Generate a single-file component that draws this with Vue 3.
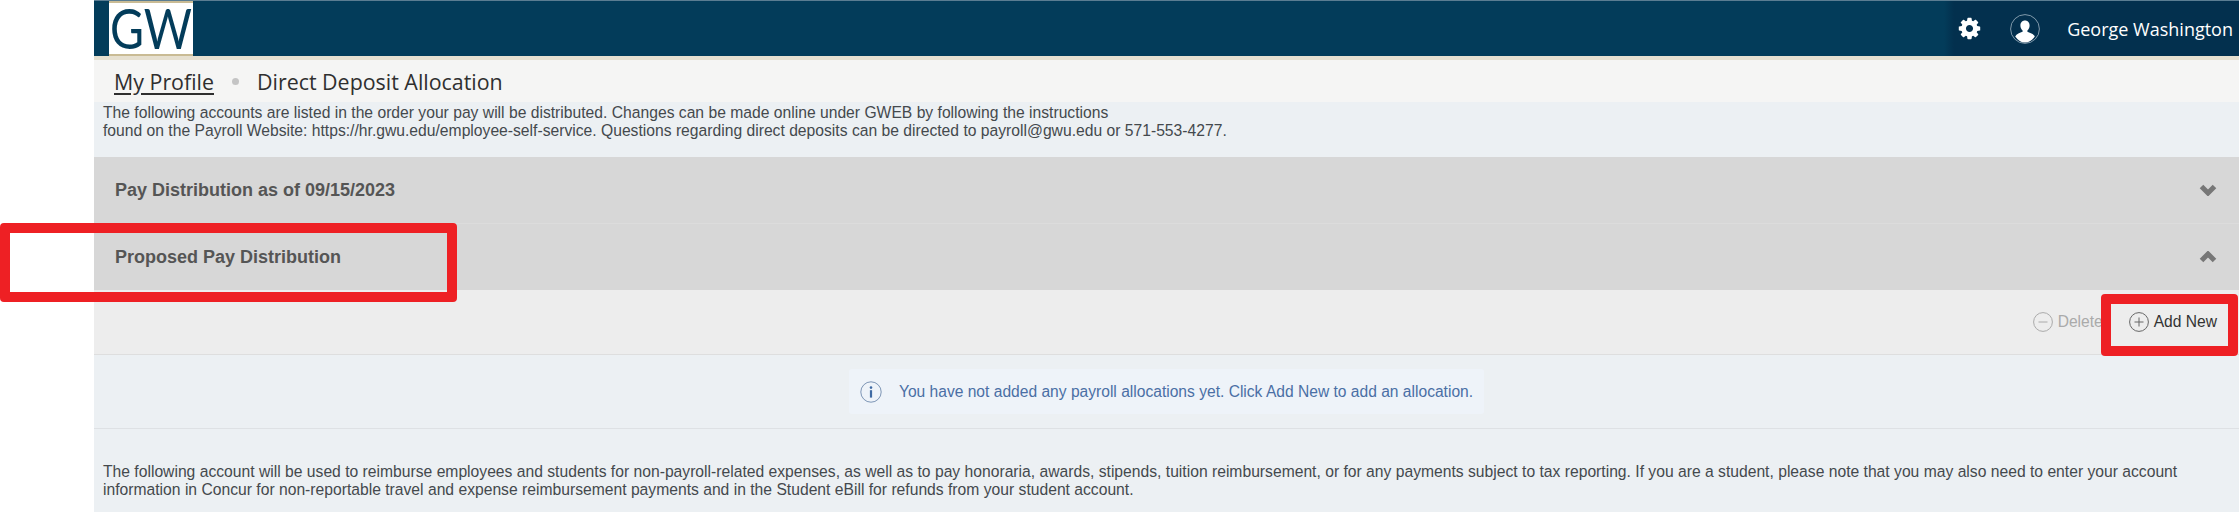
<template>
  <div class="page">
    <div class="side-gap"></div>
    <main class="main">
      <header class="topbar">
        <div class="logo">
          <svg viewBox="0 0 84 51"><text x="1" y="46" textLength="82" lengthAdjust="spacingAndGlyphs">GW</text></svg>
        </div>
        <div class="user-area">
          <svg class="gear" viewBox="0 0 1792 1792"><path fill="#fff" d="M1152 896q0-106-75-181t-181-75-181 75-75 181 75 181 181 75 181-75 75-181zm512-109v222q0 12-8 23t-20 13l-185 28q-19 54-39 91 35 50 107 138 10 12 10 25t-9 23q-27 37-99 108t-94 71q-12 0-26-9l-138-108q-44 23-91 38-16 136-29 186-7 28-36 28h-222q-14 0-24.5-8.5t-11.5-21.5l-28-184q-49-16-90-37l-141 107q-10 9-25 9-14 0-25-11-126-114-165-168-7-10-7-23 0-12 8-23 15-21 51-66.5t54-70.5q-27-50-41-99l-183-27q-13-2-21-12.5t-8-23.5v-222q0-12 8-23t19-13l186-28q14-46 39-92-40-57-107-138-10-12-10-24 0-10 9-23 26-36 98.5-107.5t94.5-71.5q13 0 26 10l138 107q44-23 91-38 16-136 29-186 7-28 36-28h222q14 0 24.5 8.5t11.5 21.5l28 184q49 16 90 37l142-107q9-9 24-9 13 0 25 10 129 119 165 170 7 8 7 22 0 12-8 23-15 21-51 66.5t-54 70.5q26 50 41 98l183 28q13 2 21 12.5t8 23.5z"/></svg>
          <svg class="avatar" viewBox="0 0 30 30">
            <circle cx="15" cy="15" r="14.4" fill="none" stroke="#9fb4c2" stroke-width="0.8"/>
            <path fill="#fff" d="M15 6.5c-2.9 0-4.6 2.2-4.6 5 0 2 .8 3.8 2.2 4.9v1.4c-2.6 1-6.2 2.1-7.4 4.6C7.9 26.3 11.2 28.6 15 28.6s7.1-2.3 9.8-6.2c-1.2-2.5-4.8-3.6-7.4-4.6v-1.4c1.4-1.1 2.2-2.9 2.2-4.9 0-2.8-1.7-5-4.6-5z"/>
          </svg>
          <span class="user-name">George Washington</span>
        </div>
      </header>

      <nav class="crumbs">
        <a class="crumb-link">My Profile</a>
        <span class="crumb-dot"></span>
        <span class="crumb-current">Direct Deposit Allocation</span>
      </nav>

      <p class="intro">The following accounts are listed in the order your pay will be distributed. Changes can be made online under GWEB by following the instructions<br>found on the Payroll Website: https://hr.gwu.edu/employee-self-service. Questions regarding direct deposits can be directed to payroll@gwu.edu or 571-553-4277.</p>

      <section class="panel-head first">
        <h3>Pay Distribution as of 09/15/2023</h3>
        <svg class="chev" viewBox="0 0 18 12"><path d="M2.5 2.5 9 9l6.5-6.5" /></svg>
      </section>
      <section class="panel-head">
        <h3>Proposed Pay Distribution</h3>
        <svg class="chev" viewBox="0 0 18 12"><path d="M2.5 9.5 9 3l6.5 6.5" /></svg>
      </section>

      <div class="toolbar">
        <span class="tool disabled">
          <svg viewBox="0 0 20 20"><circle cx="10" cy="10" r="9.4"/><path d="M5.5 10h9"/></svg>
          Delete
        </span>
        <span class="tool">
          <svg viewBox="0 0 20 20"><circle cx="10" cy="10" r="9.4"/><path d="M5.5 10h9M10 5.5v9"/></svg>
          Add New
        </span>
      </div>

      <div class="notice-row">
        <div class="notice">
          <svg viewBox="0 0 22 22">
            <circle cx="11" cy="11" r="10.2" fill="none" stroke="#7d95b5" stroke-width="1"/>
            <circle cx="11" cy="6.6" r="1.3" fill="#3f6aa3"/>
            <rect x="9.9" y="9.2" width="2.2" height="7.4" fill="#3f6aa3"/>
          </svg>
          <span>You have not added any payroll allocations yet. Click Add New to add an allocation.</span>
        </div>
      </div>

      <p class="outro">The following account will be used to reimburse employees and students for non-payroll-related expenses, as well as to pay honoraria, awards, stipends, tuition reimbursement, or for any payments subject to tax reporting. If you are a student, please note that you may also need to enter your account information in Concur for non-reportable travel and expense reimbursement payments and in the Student eBill for refunds from your student account.</p>
    </main>

    <!-- red annotation boxes drawn over the screenshot -->
    <div class="callout callout-proposed"></div>
    <div class="callout callout-add"></div>
  </div>
</template>

<script setup>
</script>

<style>
html, body {
  margin: 0;
  background: #fff;
}
</style>

<style scoped>
.page {
  position: relative;
  display: flex;
  width: 2239px;
  height: 512px;
  overflow: hidden;
  background: #fff;
  font-family: "Liberation Sans", Arial, sans-serif;
}

.side-gap {
  flex: 0 0 94px;
}

.main {
  flex: 1;
  min-width: 0;
  display: flex;
  flex-direction: column;
  background: #ecf0f3;
}

.topbar {
  flex: 0 0 60px;
  box-sizing: border-box;
  display: flex;
  justify-content: space-between;
  padding-left: 15px;
  background: linear-gradient(90deg, #033c5a 0, #033c5a 1850px, #03304e 1860px);
  border-top: 1px solid #5b7d92;
  border-bottom: 4px solid #e6e0d0;
}

.logo {
  box-sizing: border-box;
  width: 84px;
  background: #fff;
  border-top: 2px solid #c9bb94;
  border-bottom: 2px solid #c9bb94;
}

.logo svg {
  display: block;
  width: 84px;
  height: 51px;
  overflow: visible;
  fill: #033c5a;
  font-family: Lato, sans-serif;
  font-size: 56px;
}

.user-area {
  display: flex;
  align-items: center;
  padding-right: 6px;
  color: #fff;
  font-family: "Open Sans", sans-serif;
}

.gear {
  width: 25px;
  height: 25px;
}

.avatar {
  width: 30px;
  height: 30px;
  margin-left: 28px;
}

.user-name {
  margin-left: 27px;
  font-size: 18px;
}

.crumbs {
  flex: 0 0 42px;
  display: flex;
  align-items: center;
  padding-left: 20px;
  background: #f5f5f4;
  color: #2f2f2f;
  font-family: "Open Sans", sans-serif;
  font-size: 21.4px;
}

.crumb-link {
  text-decoration: underline;
  text-underline-offset: 3px;
}

.crumb-dot {
  width: 7px;
  height: 7px;
  margin: 0 18px 0 18px;
  border-radius: 50%;
  background: #c4c4c4;
}

.intro,
.outro {
  margin: 0;
  padding-left: 9px;
  color: #44494d;
  font-size: 15.68px;
  line-height: 18px;
}

.intro {
  flex: 0 0 55px;
  box-sizing: border-box;
  padding-top: 2px;
}

.panel-head {
  flex: 0 0 66px;
  box-sizing: border-box;
  display: flex;
  align-items: center;
  justify-content: space-between;
  padding: 0 22px 0 21px;
  background: #d7d7d7;
  color: #555;
}

.panel-head.first {
  flex-basis: 67px;
  border-bottom: 1px solid #dcdcdc;
}

.panel-head h3 {
  margin: 0;
  font-size: 18px;
  font-weight: 700;
}

.chev {
  width: 18px;
  height: 12px;
  fill: none;
  stroke: #777;
  stroke-width: 5;
}

.toolbar {
  flex: 0 0 65px;
  box-sizing: border-box;
  display: flex;
  align-items: center;
  justify-content: flex-end;
  gap: 26px;
  padding: 0 22px 0 0;
  background: #ededed;
  border-bottom: 1px solid #dedede;
}

.tool {
  display: flex;
  align-items: center;
  gap: 5px;
  color: #333;
  font-size: 15.6px;
}

.tool svg {
  width: 20px;
  height: 20px;
  fill: none;
  stroke: #666;
  stroke-width: 1;
}

.tool.disabled {
  color: #aaa;
}

.tool.disabled svg {
  stroke: #aaa;
}

.notice-row {
  flex: 0 0 74px;
  box-sizing: border-box;
  display: flex;
  align-items: center;
  justify-content: center;
  border-bottom: 1px solid #dee1e4;
}

.notice {
  display: flex;
  align-items: center;
  gap: 17px;
  box-sizing: border-box;
  height: 45px;
  padding: 0 11px;
  border-radius: 3px;
  background: #eef3f9;
  color: #4a6fa5;
  font-size: 15.6px;
}

.notice svg {
  width: 22px;
  height: 22px;
}

.outro {
  padding-top: 34px;
}

.callout {
  position: absolute;
  box-sizing: border-box;
  border: 10px solid #ee2024;
  border-radius: 4px;
}

.callout-proposed {
  left: 0;
  top: 223px;
  width: 457px;
  height: 79px;
}

.callout-add {
  left: 2101px;
  top: 294px;
  width: 137px;
  height: 62px;
}
</style>
